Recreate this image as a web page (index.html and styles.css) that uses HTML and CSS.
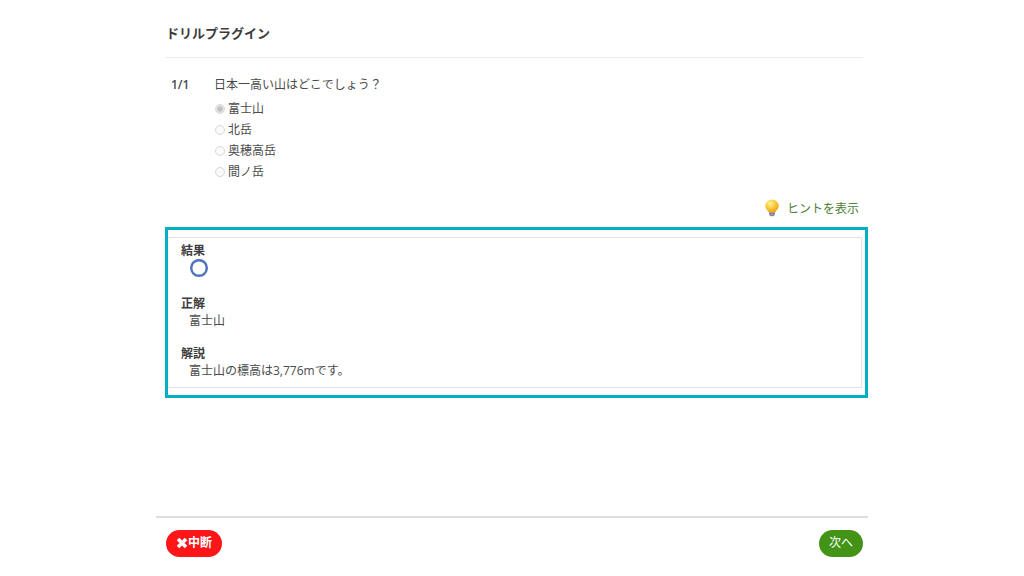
FILE: index.html
```html
<!DOCTYPE html>
<html lang="ja">
<head>
<meta charset="utf-8">
<meta name="viewport" content="width=device-width, initial-scale=1">
<title>ドリルプラグイン</title>
<link rel="stylesheet" href="styles.css">
</head>
<body>
<div class="page">
  <main class="content">
    <header class="header"><h1 class="title">ドリルプラグイン</h1></header>
    <section class="question">
      <span class="number">1/1</span>
      <fieldset class="choices">
        <legend class="prompt">日本一高い山はどこでしょう？</legend>
        <label class="choice"><input class="radio" type="radio" name="answer" checked disabled>富士山</label>
        <label class="choice"><input class="radio" type="radio" name="answer" disabled>北岳</label>
        <label class="choice"><input class="radio" type="radio" name="answer" disabled>奥穂高岳</label>
        <label class="choice"><input class="radio" type="radio" name="answer" disabled>間ノ岳</label>
      </fieldset>
    </section>
    <a class="hint" href="#hint">
      <svg class="bulb" viewBox="0 0 16 18" aria-hidden="true">
        <defs>
          <radialGradient id="glow" cx="0.38" cy="0.3" r="0.75">
            <stop offset="0" stop-color="#fff3a8"/>
            <stop offset="0.45" stop-color="#fdce3c"/>
            <stop offset="1" stop-color="#ee9c18"/>
          </radialGradient>
        </defs>
        <path d="M5 12.500h6v3L9.800 17.200H6.200L5 15.500z" fill="#a9a7b4"/>
        <path d="M5 14.400h6M6 16.200h4" stroke="#77758a" stroke-width="0.900"/>
        <path d="M8 0.600a6.700 6.500 0 0 1 6.700 6.400c0 3-2.400 3.900-3.400 6.300H4.700C3.700 10.900 1.300 10 1.300 7A6.700 6.500 0 0 1 8 0.600z" fill="url(#glow)"/>
      </svg>
      <span>ヒントを表示</span>
    </a>
    <section class="highlight">
      <dl class="result">
        <div class="entry"><dt>結果</dt><dd class="mark">
          <svg class="circle" viewBox="0 0 20 20" role="img" aria-label="正解"><circle cx="10" cy="9" r="7.800" fill="none" stroke="#5174bd" stroke-width="2.500"/></svg>
        </dd></div>
        <div class="entry"><dt>正解</dt><dd>富士山</dd></div>
        <div class="entry"><dt>解説</dt><dd>富士山の標高は3,776mです。</dd></div>
      </dl>
    </section>
  </main>
  <footer class="footer">
    <button class="button stop" type="button">
      <svg class="cross" viewBox="0 0 12 12" aria-hidden="true"><path d="M2 2l8 8M10 2l-8 8" stroke="#fff" stroke-width="3.600"/></svg>中断
    </button>
    <button class="button next" type="button">次へ</button>
  </footer>
</div>
</body>
</html>
```
FILE: styles.css
```css
* { box-sizing: border-box; }

body {
  margin: 0;
  background: #fff;
  color: #4a4a4a;
  font: 12px/17px "Open Sans", "Noto Sans CJK JP", sans-serif;
}

.page {
  display: flex;
  flex-direction: column;
  min-height: 100vh;
  max-width: 712px;
  margin: 0 auto;
}

.content {
  display: flex;
  flex-direction: column;
  flex: 1;
  padding-left: 9px;
}

.header {
  margin: 0 5px 0 1px;
  padding: 24px 0 15px;
  border-bottom: 1px solid #ebebeb;
}

.title {
  margin: 0;
  color: #3c3c3c;
  font-size: 13px;
  line-height: 18px;
}

.question {
  display: flex;
  padding: 18px 6px 0;
}

.number {
  width: 43px;
  font-weight: 600;
}

.choices {
  display: flex;
  flex-direction: column;
  margin: 0;
  padding: 0;
  border: 0;
}

.prompt {
  margin-bottom: 5px;
  padding: 0;
}

.choice {
  display: flex;
  align-items: center;
  gap: 3px;
  height: 21px;
}

.radio {
  appearance: none;
  width: 10px;
  height: 10px;
  margin: 0 0 0 1px;
  border: 1px solid #d8d8d8;
  border-radius: 50%;
  background: #fafafa;
}

.radio:checked {
  background: radial-gradient(circle, #bfc2bf 0 2px, #eceeec 4px);
}

.hint {
  display: flex;
  align-items: center;
  align-self: flex-end;
  gap: 7px;
  margin: 17px 9px 10px 0;
  color: #4b8236;
  text-decoration: none;
}

.bulb {
  width: 16px;
  height: 18px;
}

.highlight {
  padding: 7px 3px 7px 0;
  border: 3px solid #00afc1;
  background: #fdfdfd;
}

.result {
  display: flex;
  flex-direction: column;
  gap: 16px;
  margin: 0;
  padding: 4px 12px 8px;
  border: 1px solid #e2e2e2;
  border-left-color: #f4f4f4;
  background: #fff;
}

.result dt {
  color: #3c3c3c;
  font-weight: 700;
}

.result dd {
  margin: 0 0 0 8px;
}

.circle {
  display: block;
  width: 20px;
  height: 20px;
}

.footer {
  display: flex;
  align-items: flex-start;
  justify-content: space-between;
  padding: 12px 5px 19px 10px;
  border-top: 2px solid #dedede;
}

.button {
  display: flex;
  align-items: center;
  height: 27px;
  padding: 0 10px 2px;
  border: 0;
  border-radius: 14px;
  color: #fff;
  font: inherit;
}

.stop { background: #fd1518; font-weight: 600; }
.next { background: #439317; }

.cross {
  width: 12px;
  height: 12px;
}
```
